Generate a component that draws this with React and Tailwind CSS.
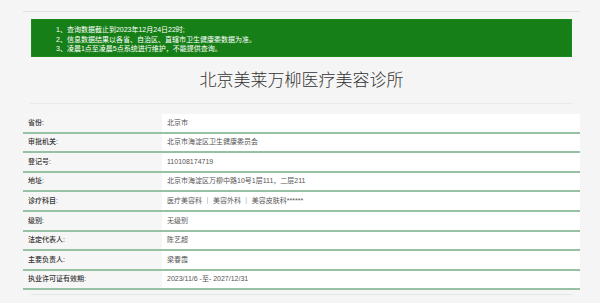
import React from 'react';

const FONT = { fontFamily: '"Liberation Sans", "Noto Sans CJK SC", sans-serif' };

const notices = [
  '1、查询数据截止到2023年12月24日22时;',
  '2、信息数据结果以各省、自治区、直辖市卫生健康委数据为准。',
  '3、凌晨1点至凌晨5点系统进行维护，不能提供查询。',
];

const rows = [
  ['省份:', '北京市'],
  ['审批机关:', '北京市海淀区卫生健康委员会'],
  ['登记号:', '110108174719'],
  ['地址:', '北京市海淀区万柳中路10号1层111，二层211'],
  ['诊疗科目:', '医疗美容科 ｜ 美容外科 ｜ 美容皮肤科******'],
  ['级别:', '无级别'],
  ['法定代表人:', '陈艺超'],
  ['主要负责人:', '梁春霞'],
  ['执业许可证有效期:', '2023/11/6 -至- 2027/12/31'],
];

export default function App() {
  return (
    <div className="w-[600px] h-[303px] overflow-hidden bg-[#f5f5f5]" style={FONT}>
      <div className="ml-[23px] w-[557px] pt-[11px]">
        <div className="border-t border-[#e2e2e2]" />

        {/* notice */}
        <div className="mt-[7px] mx-[8px] h-[38px] bg-[#177f17] border border-[#1a8a1a] pl-[24px] pt-[5px] text-white text-[7px] leading-[9.5px]">
          {notices.map(n => (
            <div key={n}>{n}</div>
          ))}
        </div>

        {/* title */}
        <div className="mx-[7px] h-[47px] flex items-center justify-center border-b border-[#eaeaea]">
          <h1 className="text-[17px] font-light text-[#333] leading-none">北京美莱万柳医疗美容诊所</h1>
        </div>

        {/* table */}
        <div className="mt-[10px]">
          {rows.map(([k, v]) => (
            <div key={k} className="flex h-[19.6px] border-b-2 border-[#97c0a5]">
              <div className="w-[139px] bg-[#f6f6f6] pl-[5px] flex items-center text-[7px] font-medium text-[#333]">
                {k}
              </div>
              <div className="flex-1 bg-white pl-[5px] flex items-center text-[7px] text-[#555]">
                {v}
              </div>
            </div>
          ))}
        </div>

        <div className="mx-[8px] mt-[4px] border-t border-[#e6e6e6]" />
      </div>
    </div>
  );
}
